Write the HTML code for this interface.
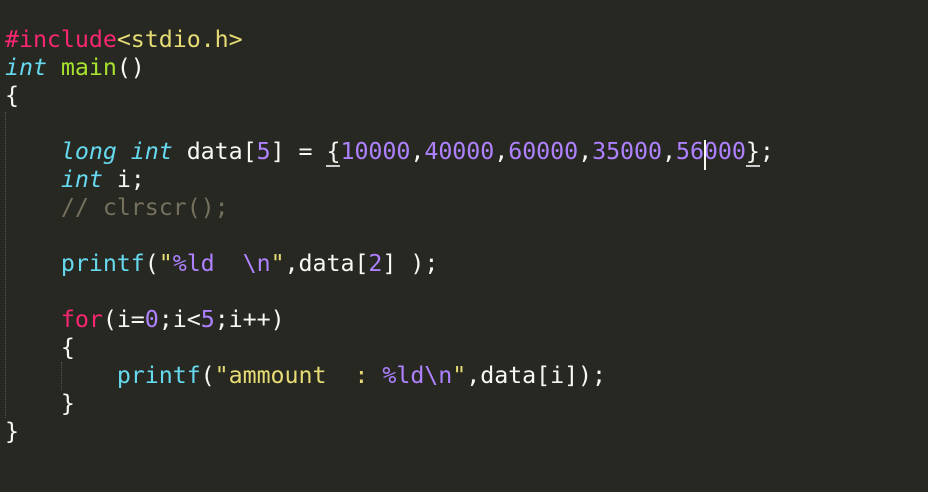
<!DOCTYPE html>
<html><head><meta charset="utf-8"><style>
html,body{margin:0;padding:0;background:#272822;width:928px;height:492px;overflow:hidden}
pre{position:absolute;left:5px;top:26px;margin:0;font-family:"DejaVu Sans Mono","Liberation Mono",monospace;font-size:23.3px;letter-spacing:-0.05px;line-height:28px;color:#f8f8f2}
.k{color:#f92672}.t{color:#66d9ef;font-style:italic}.f{color:#a6e22e}.n{color:#ae81ff}.s{color:#e6db74}.c{color:#75715e}.b{color:#66d9ef}
.g{position:absolute;border-left:1px dotted #555;width:0}
.u{border-bottom:2px solid #ccc}
.cur{position:absolute;left:704px;top:140px;width:2px;height:30px;background:#f8f8f0}
</style></head><body>
<div class="g" style="left:5px;top:112px;height:306px"></div>
<div class="g" style="left:61px;top:362px;height:28px"></div>
<pre><span class="k">#include</span><span class="s">&lt;stdio.h&gt;</span>
<span class="t">int</span> <span class="f">main</span>()
{

    <span class="t">long</span> <span class="t">int</span> data[<span class="n">5</span>] = <span class="u">{</span><span class="n">10000</span>,<span class="n">40000</span>,<span class="n">60000</span>,<span class="n">35000</span>,<span class="n">56000</span><span class="u">}</span>;
    <span class="t">int</span> i;
    <span class="c">// clrscr();</span>

    <span class="b">printf</span>(<span class="s">"</span><span class="n">%ld</span><span class="s">  </span><span class="n">\n</span><span class="s">"</span>,data[<span class="n">2</span>] );

    <span class="k">for</span>(i=<span class="n">0</span>;i&lt;<span class="n">5</span>;i++)
    {
        <span class="b">printf</span>(<span class="s">"ammount  : </span><span class="n">%ld\n</span><span class="s">"</span>,data[i]);
    }
}</pre>
<div class="cur"></div>
</body></html>
